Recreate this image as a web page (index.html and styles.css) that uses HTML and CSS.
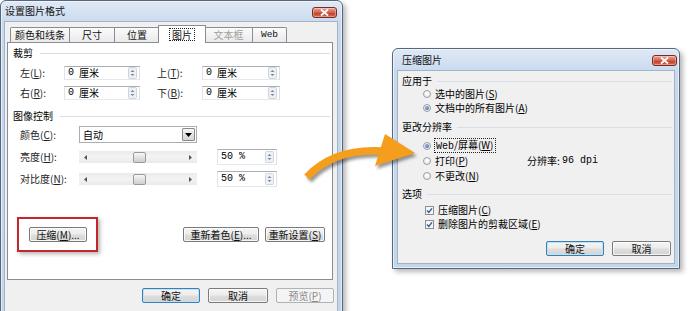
FILE: index.html
```html
<!DOCTYPE html>
<html lang="zh-CN">
<head>
<meta charset="utf-8">
<title>设置图片格式 / 压缩图片</title>
<link rel="stylesheet" href="styles.css">
</head>
<body>
<div class="canvas">

  <section class="win win-format">
    <header class="titlebar">
      <span class="title">设置图片格式</span>
      <span class="close"><svg width="9" height="7" viewBox="0 0 9 7"><path d="M1 0.5 L8 6.5 M8 0.5 L1 6.5" stroke="#fff" stroke-width="1.8"/></svg></span>
    </header>
    <div class="client">
      <nav class="tabs">
        <span class="tab t1">颜色和线条</span>
        <span class="tab t2">尺寸</span>
        <span class="tab t3">位置</span>
        <span class="tab t4 active"><span class="focus">图片</span></span>
        <span class="tab t5 disabled">文本框</span>
        <span class="tab t6 mono">Web</span>
      </nav>
      <div class="panel">
        <div class="group-title"><span>裁剪</span><i class="rule"></i></div>
        <div class="crop-grid">
          <span class="lbl">左(<u>L</u>):</span>
          <div class="field"><span class="val"><span class="num">0</span>厘米</span><svg class="spin" width="9" height="12" viewBox="0 0 9 12"><rect x=".5" y=".5" width="8" height="11" rx="1" fill="#edf1f5" stroke="#cfd5dc"/><path d="M2.5 5 L4.5 3 L6.5 5Z M2.5 7 L4.5 9 L6.5 7Z" fill="#7b8794"/></svg></div>
          <span class="lbl lbl2">上(<u>T</u>):</span>
          <div class="field"><span class="val"><span class="num">0</span>厘米</span><svg class="spin" width="9" height="12" viewBox="0 0 9 12"><rect x=".5" y=".5" width="8" height="11" rx="1" fill="#edf1f5" stroke="#cfd5dc"/><path d="M2.5 5 L4.5 3 L6.5 5Z M2.5 7 L4.5 9 L6.5 7Z" fill="#7b8794"/></svg></div>
          <span class="lbl">右(<u>R</u>):</span>
          <div class="field"><span class="val"><span class="num">0</span>厘米</span><svg class="spin" width="9" height="12" viewBox="0 0 9 12"><rect x=".5" y=".5" width="8" height="11" rx="1" fill="#edf1f5" stroke="#cfd5dc"/><path d="M2.5 5 L4.5 3 L6.5 5Z M2.5 7 L4.5 9 L6.5 7Z" fill="#7b8794"/></svg></div>
          <span class="lbl lbl2">下(<u>B</u>):</span>
          <div class="field"><span class="val"><span class="num">0</span>厘米</span><svg class="spin" width="9" height="12" viewBox="0 0 9 12"><rect x=".5" y=".5" width="8" height="11" rx="1" fill="#edf1f5" stroke="#cfd5dc"/><path d="M2.5 5 L4.5 3 L6.5 5Z M2.5 7 L4.5 9 L6.5 7Z" fill="#7b8794"/></svg></div>
        </div>

        <div class="group-title gt2"><span>图像控制</span><i class="rule"></i></div>
        <div class="image-grid">
          <span class="lbl">颜色(<u>C</u>):</span>
          <div class="combo"><span class="val">自动</span><span class="drop"><svg width="7" height="4" viewBox="0 0 7 4"><path d="M0 0 H7 L3.5 4Z" fill="#000"/></svg></span></div>
          <span></span>
          <span></span>

          <span class="lbl">亮度(<u>H</u>):</span>
          <div class="slider"><svg class="arr" width="3" height="5" viewBox="0 0 3 5"><path d="M3 0 V5 L0 2.5Z" fill="#555"/></svg><span class="thumb"></span><svg class="arr" width="3" height="5" viewBox="0 0 3 5"><path d="M0 0 V5 L3 2.5Z" fill="#555"/></svg></div>
          <span></span>
          <div class="field pct"><span class="val mono">50 %</span><svg class="spin" width="9" height="12" viewBox="0 0 9 12"><rect x=".5" y=".5" width="8" height="11" rx="1" fill="#edf1f5" stroke="#cfd5dc"/><path d="M2.5 5 L4.5 3 L6.5 5Z M2.5 7 L4.5 9 L6.5 7Z" fill="#7b8794"/></svg></div>

          <span class="lbl">对比度(<u>N</u>):</span>
          <div class="slider"><svg class="arr" width="3" height="5" viewBox="0 0 3 5"><path d="M3 0 V5 L0 2.5Z" fill="#555"/></svg><span class="thumb"></span><svg class="arr" width="3" height="5" viewBox="0 0 3 5"><path d="M0 0 V5 L3 2.5Z" fill="#555"/></svg></div>
          <span></span>
          <div class="field pct"><span class="val mono">50 %</span><svg class="spin" width="9" height="12" viewBox="0 0 9 12"><rect x=".5" y=".5" width="8" height="11" rx="1" fill="#edf1f5" stroke="#cfd5dc"/><path d="M2.5 5 L4.5 3 L6.5 5Z M2.5 7 L4.5 9 L6.5 7Z" fill="#7b8794"/></svg></div>
        </div>

        <div class="action-row">
          <div class="highlight"><span class="btn btn-compress">压缩(<u>M</u>)...</span></div>
          <span class="spacer"></span>
          <span class="btn btn-recolor">重新着色(<u>E</u>)...</span>
          <span class="btn btn-reset">重新设置(<u>S</u>)</span>
        </div>
      </div>
      <div class="footer">
        <span class="btn default w58">确定</span>
        <span class="btn w60">取消</span>
        <span class="btn disabled w58">预览(<u>P</u>)</span>
      </div>
    </div>
  </section>

  <section class="win win-compress">
    <header class="titlebar">
      <span class="title">压缩图片</span>
      <span class="close"><svg width="9" height="7" viewBox="0 0 9 7"><path d="M1 0.5 L8 6.5 M8 0.5 L1 6.5" stroke="#fff" stroke-width="1.8"/></svg></span>
    </header>
    <div class="client client-c">
      <div class="group-title"><span>应用于</span><i class="rule"></i></div>
      <div class="opt"><span class="radio"></span><span>选中的图片(<u>S</u>)</span></div>
      <div class="opt"><span class="radio on"></span><span>文档中的所有图片(<u>A</u>)</span></div>

      <div class="group-title gt-res"><span>更改分辨率</span><i class="rule"></i></div>
      <div class="opt opt15 first-res"><span class="radio on"></span><span class="focus"><span class="mono">Web</span>/屏幕(<u>W</u>)</span></div>
      <div class="opt opt15"><span class="radio"></span><span class="opt-label">打印(<u>P</u>)</span><span class="res-label">分辨率:</span><span class="mono">96 dpi</span></div>
      <div class="opt opt15"><span class="radio"></span><span>不更改(<u>N</u>)</span></div>

      <div class="group-title gt-opt"><span>选项</span><i class="rule"></i></div>
      <div class="opt chk first-chk"><svg class="check" width="9" height="9" viewBox="0 0 9 9"><rect x=".5" y=".5" width="8" height="8" fill="#f4f6f9" stroke="#8e8f8f"/><path d="M2 4.5 L3.8 6.5 L7 2.3" fill="none" stroke="#3b5a93" stroke-width="1.4"/></svg><span>压缩图片(<u>C</u>)</span></div>
      <div class="opt chk"><svg class="check" width="9" height="9" viewBox="0 0 9 9"><rect x=".5" y=".5" width="8" height="8" fill="#f4f6f9" stroke="#8e8f8f"/><path d="M2 4.5 L3.8 6.5 L7 2.3" fill="none" stroke="#3b5a93" stroke-width="1.4"/></svg><span>删除图片的剪裁区域(<u>E</u>)</span></div>

      <div class="footer footer-c">
        <span class="btn default w58">确定</span>
        <span class="btn w59">取消</span>
      </div>
    </div>
  </section>

  <svg class="arrow" width="690" height="311" viewBox="0 0 690 311">
    <g class="arrow-shape">
      <path d="M307 177 C322 161 346 149 382 151" fill="none" stroke="#f59d1c" stroke-width="7.5"/>
      <path d="M385 134 L415 153 L375 166 Z" fill="#f59d1c"/>
    </g>
  </svg>
</div>
</body>
</html>
```

FILE: styles.css
```css
* { box-sizing: border-box; }
html, body { margin: 0; padding: 0; }
body {
  width: 690px;
  height: 311px;
  overflow: hidden;
  background: #fff;
  font-family: "Noto Sans CJK SC", "Liberation Sans", sans-serif;
  font-size: 10px;
  color: #000;
}
u { text-decoration: underline; text-underline-offset: 1px; }
.mono { font-family: "Liberation Mono", "DejaVu Sans Mono", monospace; }
.num { font-family: "Liberation Mono", "DejaVu Sans Mono", monospace; margin-right: 5px; }

.canvas { position: relative; width: 690px; height: 311px; }

/* ---------- windows ---------- */
.win {
  position: absolute;
  display: flex;
  flex-direction: column;
  background: linear-gradient(#dfe9f5, #c8d9ee 24px, #c3d5eb);
  border: 1px solid #56687d;
  border-radius: 6px 6px 0 0;
  box-shadow: 3px 3px 5px rgba(0, 0, 0, 0.28), inset 0 0 0 1px rgba(255, 255, 255, 0.55);
}
.win-format { left: 0; top: 0; width: 343px; height: 318px; padding: 0 4px 5px 3px; }
.win-compress { left: 392px; top: 48px; width: 288px; height: 221px; padding: 0 4px 4px 4px; }

.titlebar {
  display: flex;
  align-items: center;
  justify-content: space-between;
  flex: none;
}
.win-format .titlebar { height: 20px; margin: 0 -4px 0 -3px; padding: 0 5px 0 4px; }
.win-compress .titlebar { height: 21px; margin: 0 -4px; padding: 0 2px 0 9px; }
.title { font-size: 10px; color: #111; line-height: 12px; }
.close {
  width: 25px;
  height: 11px;
  border: 1px solid #7a2a20;
  border-radius: 3px;
  background: linear-gradient(#e8a597, #d3604c 50%, #c13d28 51%, #d46a4f);
  display: flex;
  align-items: center;
  justify-content: center;
  box-shadow: inset 0 0 0 1px rgba(255, 255, 255, 0.35);
}
.win-format .close { margin-top: 2px; }
.win-compress .close { margin-top: 1px; }

.client {
  flex: 1;
  background: #f0f0f0;
  border: 1px solid #a4b3c5;
  display: flex;
  flex-direction: column;
}
.win-format .client { padding: 3px 2px 0 2px; }

/* ---------- tabs ---------- */
.tabs {
  display: flex;
  align-items: flex-end;
  height: 17px;
  padding-left: 3px;
  flex: none;
}
.tab {
  height: 15px;
  border: 1px solid #898c95;
  border-bottom: none;
  border-left: none;
  background: linear-gradient(#fbfbfb, #eaeaea);
  display: flex;
  align-items: center;
  justify-content: center;
  line-height: 12px;
  color: #111;
}
.t1 { width: 60px; border-left: 1px solid #898c95; border-radius: 2px 0 0 0; }
.t2 { width: 45px; }
.t3 { width: 45px; }
.t4 { width: 45px; }
.t5 { width: 48px; }
.t6 { width: 34px; font-size: 9.5px; border-radius: 0 2px 0 0; }
.tab.active {
  height: 18px;
  width: 48px;
  margin: 0 -1px -1px -2px;
  border-left: 1px solid #898c95;
  background: #fff;
  position: relative;
  z-index: 1;
  padding-bottom: 1px;
}
.tab.disabled { color: #a0a0a0; }
.focus { outline: 1px dotted #222; outline-offset: 0; padding: 0 2px; line-height: 11px; }

.panel {
  height: 238px;
  margin-right: 2px;
  background: #fff;
  border: 1px solid #898c95;
  padding: 4px 7px 0 5px;
  flex: none;
}

.group-title {
  display: flex;
  align-items: center;
  height: 12px;
  line-height: 12px;
}
.panel .group-title { margin-right: -5px; }
.rule { flex: 1; height: 1px; background: #d5dfe5; margin-left: 7px; }
.gt2 { margin-top: 10px; }

.lbl { color: #222; line-height: 12px; }

.crop-grid {
  display: grid;
  grid-template-columns: 44px 76px 62px 78px;
  grid-auto-rows: 14px;
  row-gap: 6px;
  align-items: center;
  margin: 7px 0 0 7px;
}
.lbl2 { padding-left: 17px; }

.field {
  height: 100%;
  background: #fff;
  border: 1px solid #abadb3;
  border-color: #abadb3 #dbdfe6 #e3e9ef #e2e3ea;
  display: flex;
  align-items: center;
  justify-content: space-between;
  padding: 0 2px 0 3px;
}
.val { line-height: 12px; display: flex; align-items: center; }
.spin { display: block; flex: none; }

.image-grid {
  display: grid;
  grid-template-columns: 59px 118px 20px 60px;
  grid-template-rows: 17px 16px 16px;
  row-gap: 6px;
  align-items: center;
  margin: 4px 0 0 7px;
}
.combo {
  height: 17px;
  background: #fff;
  border: 1px solid #abadb3;
  display: flex;
  align-items: stretch;
  justify-content: space-between;
  padding: 1px 1px 1px 3px;
}
.combo .val { align-self: center; }
.drop {
  width: 13px;
  border: 1px solid #8a8a8a;
  border-radius: 1px;
  background: linear-gradient(#f6f6f6, #e4e4e4 50%, #d6d6d6);
  display: flex;
  align-items: center;
  justify-content: center;
}
.slider {
  height: 12px;
  background: linear-gradient(#eaeaea, #f3f3f3 50%, #eaeaea);
  display: flex;
  align-items: center;
  justify-content: space-between;
  padding: 0 5px 0 5px;
}
.arr { display: block; }
.thumb {
  width: 13px;
  height: 11px;
  border: 1px solid #9a9a9a;
  border-radius: 2px;
  background: linear-gradient(#f7f7f7, #e0e0e0 55%, #cfcfcf);
  margin-left: 2px;
}
.pct { height: 16px; }

.action-row {
  display: flex;
  align-items: center;
  margin-top: 30px;
  gap: 6px;
  padding-left: 4px;
}
.highlight {
  width: 81px;
  height: 35px;
  border: 2px solid #c1272d;
  box-shadow: 2px 2px 4px rgba(0, 0, 0, 0.3);
  display: flex;
  align-items: center;
  justify-content: center;
  padding-left: 1px;
}
.spacer { flex: 1; }

.btn {
  height: 15px;
  border: 1px solid #7a7a7a;
  border-radius: 2px;
  background: linear-gradient(#f5f5f5, #ececec 48%, #dedede 52%, #d4d4d4);
  box-shadow: inset 0 0 0 1px rgba(255, 255, 255, 0.75);
  display: flex;
  align-items: center;
  justify-content: center;
  line-height: 12px;
  color: #111;
  flex: none;
}
.btn-compress { width: 58px; }
.btn-recolor { width: 76px; }
.btn-reset { width: 60px; }
.btn.default { border-color: #3c7fb1; box-shadow: inset 0 0 0 1px #bfe2f6; }
.btn.disabled { border-color: #adb2b5; background: #f4f4f4; color: #8b8b8b; box-shadow: none; }
.w58 { width: 58px; }
.w59 { width: 59px; }
.w60 { width: 60px; }

.footer {
  display: flex;
  justify-content: flex-end;
  gap: 8px;
  margin-top: 8px;
  padding-right: 1px;
}

/* ---------- compress dialog ---------- */
.client-c { padding: 4px 2px 0 4px; }
.client-c .group-title { margin-right: 0; }
.client-c .rule { margin-left: 5px; }
.opt {
  display: flex;
  align-items: center;
  height: 14px;
  padding-left: 21px;
  line-height: 12px;
}
.opt15 { height: 15px; }
.radio {
  width: 8px;
  height: 8px;
  border-radius: 50%;
  border: 1px solid #9a9da0;
  background: radial-gradient(circle at 50% 40%, #ffffff, #e2e2e2);
  margin-right: 4px;
  flex: none;
  position: relative;
}
.radio.on::after {
  content: "";
  position: absolute;
  left: 1px;
  top: 1px;
  width: 4px;
  height: 4px;
  border-radius: 50%;
  background: radial-gradient(circle at 40% 35%, #8fb6e6, #2c5a95);
}
.opt .focus { padding: 0 1px; }
.gt-res { margin-top: 6px; }
.first-res { margin-top: 5px; }
.opt-label { width: 92px; }
.res-label { width: 35px; }
.gt-opt { margin-top: 5px; }
.first-chk { margin-top: 3px; }
.chk { padding-left: 23px; }
.check { display: block; margin-right: 4px; flex: none; }
.footer-c { margin-top: 10px; gap: 8px; padding-right: 1px; }

/* ---------- arrow overlay ---------- */
.arrow {
  position: absolute;
  left: 0;
  top: 0;
  pointer-events: none;
  z-index: 5;
}
.arrow-shape { filter: drop-shadow(2px 3px 1.5px rgba(0, 0, 0, 0.4)); }
```
